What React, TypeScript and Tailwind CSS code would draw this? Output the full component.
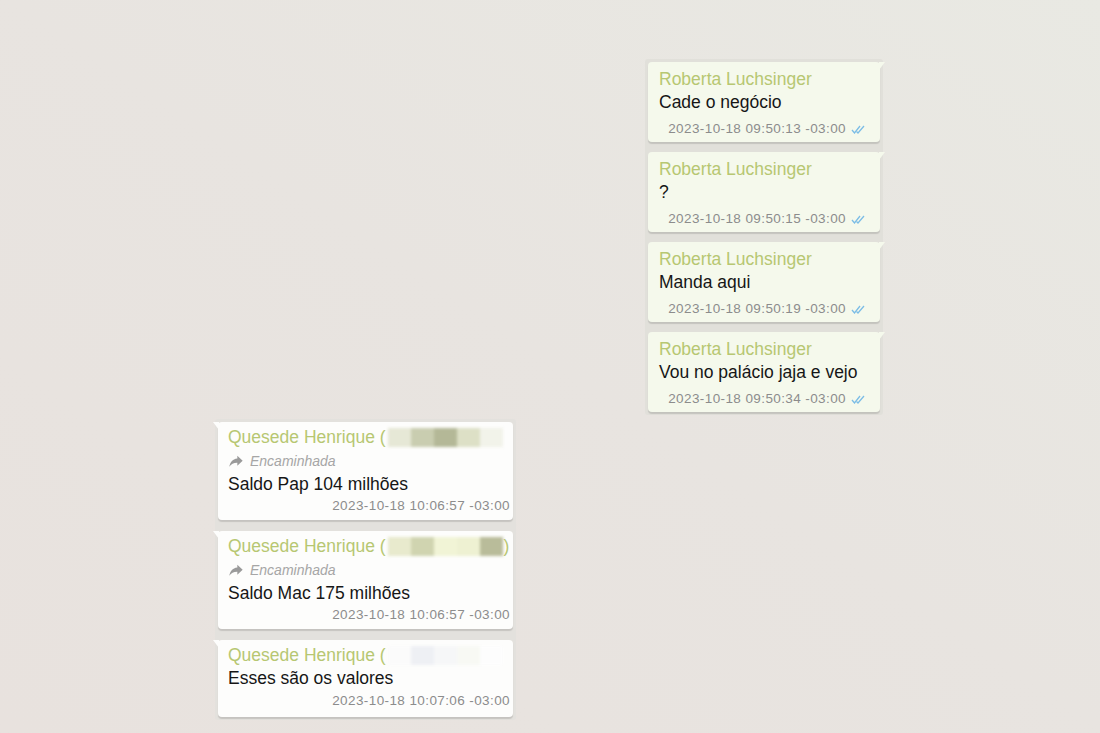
import React from "react";

type RightMsg = { text: string; time: string };
type LeftMsg = { text: string; time: string; forwarded: boolean; blur: string[]; close: boolean };

const rightMsgs: RightMsg[] = [
  { text: "Cade o negócio", time: "2023-10-18 09:50:13 -03:00" },
  { text: "?", time: "2023-10-18 09:50:15 -03:00" },
  { text: "Manda aqui", time: "2023-10-18 09:50:19 -03:00" },
  { text: "Vou no palácio jaja e vejo", time: "2023-10-18 09:50:34 -03:00" },
];

const leftMsgs: LeftMsg[] = [
  {
    text: "Saldo Pap 104 milhões",
    time: "2023-10-18 10:06:57 -03:00",
    forwarded: true,
    blur: ["#e6e8d6", "#c9cdb0", "#b4b897", "#dde0c6", "#f2f3ea"],
    close: false,
  },
  {
    text: "Saldo Mac 175 milhões",
    time: "2023-10-18 10:06:57 -03:00",
    forwarded: true,
    blur: ["#e8eacd", "#d0d4b0", "#f1f4d6", "#eef1d2", "#b9bc9a"],
    close: true,
  },
  {
    text: "Esses são os valores",
    time: "2023-10-18 10:07:06 -03:00",
    forwarded: false,
    blur: ["#fbfbfb", "#eef0f4", "#f6f7f8", "#f8f9f4", "#fdfdfd"],
    close: false,
  },
];

const font = { fontFamily: '"Liberation Sans", Arial, sans-serif' };

function DoubleCheck() {
  return (
    <svg width="15" height="9" viewBox="0 0 15 9" className="ml-[5px] shrink-0">
      <path d="M1 5l2.5 3L9 1" fill="none" stroke="#7cbde6" strokeWidth="1.3" />
      <path d="M5.5 6.5l1.5 1.5L13 1" fill="none" stroke="#7cbde6" strokeWidth="1.3" />
    </svg>
  );
}

function ForwardIcon() {
  return (
    <svg width="16" height="14" viewBox="0 0 24 20" className="mr-[6px] shrink-0">
      <path d="M14 2l8 7.5-8 7.5v-4.3C8.5 12.6 4.8 14.4 2 18.5 3 12.5 6.5 7.2 14 6.3V2z" fill="#9a9a9a" />
    </svg>
  );
}

function RightBubble({ m }: { m: RightMsg }) {
  return (
    <div className="relative w-[232px] h-[80px] bg-[#f5f9ec] rounded-[4px] pt-[6px] pl-[11px] pr-[14px] shadow-[0_2px_1px_rgba(0,0,0,0.13)] whitespace-nowrap">
      <div className="absolute right-[-5px] top-0 w-0 h-0 border-t-[8px] border-t-[#f5f9ec] border-r-[6px] border-r-transparent" />
      <div className="text-[17.5px] leading-[22px] text-[#b7c772]">Roberta Luchsinger</div>
      <div className="text-[17.5px] leading-[24px] text-[#161616]">{m.text}</div>
      <div className="mt-[6px] flex items-center justify-end text-[13.5px] tracking-[0.4px] leading-[18px] text-[#8c8c8c]">
        {m.time}
        <DoubleCheck />
      </div>
    </div>
  );
}

function LeftBubble({ m }: { m: LeftMsg }) {
  return (
    <div className="relative w-[295px] bg-[#fdfdfc] rounded-[4px] pt-[4px] pl-[10px] pr-[3px] pb-[5px] shadow-[0_2px_1px_rgba(0,0,0,0.13)] whitespace-nowrap">
      <div className="absolute left-[-5px] top-0 w-0 h-0 border-t-[8px] border-t-[#fdfdfc] border-l-[6px] border-l-transparent" />
      <div className="flex items-center text-[17.5px] leading-[22px] text-[#b7c772]">
        <span>Quesede Henrique (</span>
        <div className="ml-[2px] flex shrink-0 h-[19px] blur-[1.5px]">
          {m.blur.map((c, i) => (
            <div key={i} className="w-[23px] h-full" style={{ background: c }} />
          ))}
        </div>
        {m.close ? <span className="ml-[1px]">)</span> : null}
      </div>
      {m.forwarded ? (
        <div className="mt-[3px] flex items-center text-[14px] leading-[20px] italic text-[#a6a6a6]">
          <ForwardIcon />
          Encaminhada
        </div>
      ) : null}
      <div className={"text-[17.5px] leading-[24px] text-[#161616] " + (m.forwarded ? "mt-[1px]" : "")}>
        {m.text}
      </div>
      <div
        className={
          "flex justify-end text-[13.5px] tracking-[0.4px] leading-[18px] text-[#8c8c8c] " +
          (m.forwarded ? "mt-[1px]" : "mt-[2px] pb-[2px]")
        }
      >
        {m.time}
      </div>
    </div>
  );
}

export default function App() {
  return (
    <div
      className="w-[1100px] h-[733px] overflow-hidden bg-gradient-to-bl from-[#e9e9e3] via-[#e8e4e0] to-[#e8e2de] pt-[59px]"
      style={font}
    >
      <div className="ml-[645px] w-fit p-[3px] bg-[#e1e0da] rounded-[3px] flex flex-col gap-[10px]">
        {rightMsgs.map((m, i) => (
          <RightBubble key={i} m={m} />
        ))}
      </div>
      <div className="ml-[215px] mt-[4px] w-fit p-[3px] bg-[#e3e1dd] rounded-[3px] flex flex-col gap-[11px]">
        {leftMsgs.map((m, i) => (
          <LeftBubble key={i} m={m} />
        ))}
      </div>
    </div>
  );
}
